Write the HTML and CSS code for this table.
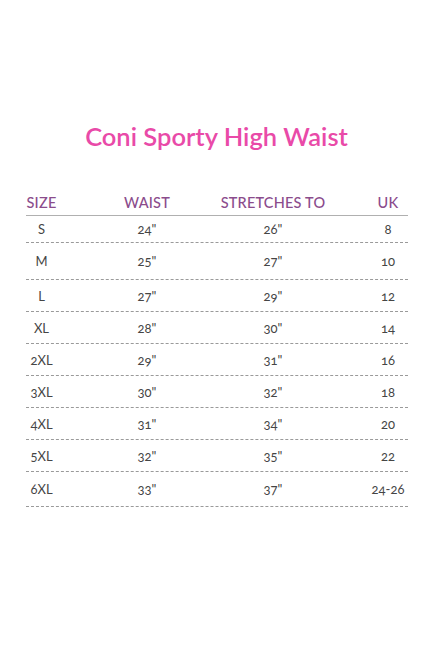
FILE: index.html
```html
<!DOCTYPE html>
<html>
<head>
<meta charset="utf-8">
<link rel="stylesheet" href="styles.css">
</head>
<body>
<div class="page">
  <h1 class="title">Coni Sporty High Waist</h1>
  <div class="table">
    <div class="row head">
      <div class="c1">SIZE</div><div class="c2">WAIST</div><div class="c3">STRETCHES TO</div><div class="c4">UK</div>
    </div>
    <div class="row r1"><div class="c1">S</div><div class="c2">24"</div><div class="c3">26"</div><div class="c4">8</div></div>
    <div class="row r2"><div class="c1">M</div><div class="c2">25"</div><div class="c3">27"</div><div class="c4">10</div></div>
    <div class="row"><div class="c1">L</div><div class="c2">27"</div><div class="c3">29"</div><div class="c4">12</div></div>
    <div class="row"><div class="c1">XL</div><div class="c2">28"</div><div class="c3">30"</div><div class="c4">14</div></div>
    <div class="row"><div class="c1">2XL</div><div class="c2">29"</div><div class="c3">31"</div><div class="c4">16</div></div>
    <div class="row"><div class="c1">3XL</div><div class="c2">30"</div><div class="c3">32"</div><div class="c4">18</div></div>
    <div class="row"><div class="c1">4XL</div><div class="c2">31"</div><div class="c3">34"</div><div class="c4">20</div></div>
    <div class="row"><div class="c1">5XL</div><div class="c2">32"</div><div class="c3">35"</div><div class="c4">22</div></div>
    <div class="row last"><div class="c1">6XL</div><div class="c2">33"</div><div class="c3">37"</div><div class="c4">24-26</div></div>
  </div>
</div>
</body>
</html>
```
FILE: styles.css
```css
html, body {
  margin: 0;
  padding: 0;
  background: #ffffff;
}
.page {
  width: 433px;
  height: 650px;
  padding-top: 118px;
  box-sizing: border-box;
  font-family: "Lato", "Open Sans", sans-serif;
}
.title {
  margin: 0;
  text-align: center;
  font-size: 25.5px;
  line-height: 36px;
  font-weight: 600;
  color: #e94aa8;
}
.table {
  margin: 40px 25px 0 26px;
}
.row {
  display: grid;
  grid-template-columns: 31px 27px 126px 126px 32px 40px;
  box-sizing: border-box;
  height: 32px;
  align-items: center;
  border-bottom: 1px dashed #9a9a9a;
  font-size: 13px;
  font-weight: 400;
  color: #454545;
  font-variant-numeric: oldstyle-nums;
}
.row > div {
  justify-self: center;
  white-space: nowrap;
}
.c1 { grid-column: 1; }
.c2 { grid-column: 3; }
.c3 { grid-column: 4; }
.c4 { grid-column: 6; }
.row.head {
  height: 22px;
  align-items: start;
  border-bottom: 1px solid #b0b0b0;
  font-size: 14.5px;
  font-weight: 500;
  color: #8b4c8c;
  letter-spacing: 0.2px;
}
.row.r1 { height: 27px; }
.row.r2 { height: 37px; }
.row.last { height: 35px; }
```
